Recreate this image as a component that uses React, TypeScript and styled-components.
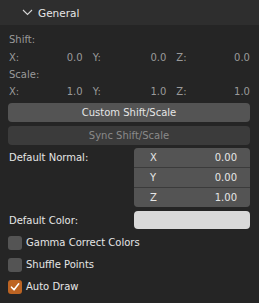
import React from 'react'
import styled, { createGlobalStyle } from 'styled-components'

const GlobalStyle = createGlobalStyle`
  html, body {
    margin: 0;
    padding: 0;
    background: #252525;
  }
`

const Panel = styled.div`
  width: 259px;
  height: 303px;
  background: #252525;
  font-family: 'DejaVu Sans', sans-serif;
  font-size: 10px;
  color: #e6e6e6;
  display: flex;
  flex-direction: column;
  overflow: hidden;
`

const Header = styled.div`
  height: 25px;
  flex: none;
  background: #2e2e2e;
  display: flex;
  align-items: center;
  gap: 5px;
  padding-left: 22px;
  font-size: 10.5px;
  color: #e6e6e6;
`

const Body = styled.div`
  display: flex;
  flex-direction: column;
  padding: 6px 9px 0 8px;
`

const Label = styled.div<{ $dim?: boolean }>`
  height: 17.4px;
  display: flex;
  align-items: center;
  padding-left: 1px;
  color: ${({ $dim }) => ($dim ? '#9a9a9a' : '#e6e6e6')};
`

const AxisRow = styled.div`
  height: 17.4px;
  display: grid;
  grid-template-columns: repeat(3, 1fr);
  column-gap: 10px;
  padding-left: 1px;
  color: #9a9a9a;
`

const AxisCell = styled.div`
  display: flex;
  align-items: center;
  justify-content: space-between;
`

const Button = styled.div<{ $disabled?: boolean }>`
  height: 19px;
  margin-top: ${({ $disabled }) => ($disabled ? '4px' : '2px')};
  border-radius: 4px;
  background: ${({ $disabled }) => ($disabled ? '#3b3b3b' : '#545454')};
  color: ${({ $disabled }) => ($disabled ? '#8a8a8a' : '#e6e6e6')};
  display: flex;
  align-items: center;
  justify-content: center;
`

const PropRow = styled.div<{ $top: number }>`
  display: flex;
  align-items: flex-start;
  margin-top: ${({ $top }) => $top}px;
`

const PropLabel = styled.div`
  width: 125px;
  padding-left: 1px;
  height: 19px;
  display: flex;
  align-items: center;
`

const Vector = styled.div`
  flex: 1;
  border-radius: 4px;
  overflow: hidden;
  display: flex;
  flex-direction: column;
  gap: 1px;
  background: #3b3b3b;
`

const VectorItem = styled.div`
  height: 19px;
  background: #545454;
  display: flex;
  align-items: center;
  justify-content: space-between;
  padding: 0 13px 0 16px;
`

const ColorField = styled.div`
  flex: 1;
  height: 18px;
  border-radius: 4px;
  background: #d9d9d9;
`

const CheckRow = styled.label<{ $top: number }>`
  display: flex;
  align-items: center;
  gap: 4px;
  height: 16px;
  margin-top: ${({ $top }) => $top}px;
`

const Box = styled.span<{ $checked?: boolean }>`
  width: 14px;
  height: 14px;
  border-radius: 3px;
  background: ${({ $checked }) => ($checked ? '#bd6423' : '#545454')};
  display: flex;
  align-items: center;
  justify-content: center;
`

const Chevron = () => (
  <svg width="11" height="7" viewBox="0 0 11 7">
    <path d="M1 1 L5.5 5.5 L10 1" fill="none" stroke="#d6d6d6" strokeWidth="1.1" />
  </svg>
)

const Check = () => (
  <svg width="10" height="10" viewBox="0 0 10 10">
    <path d="M1.5 5.2 L4 7.8 L8.7 1.8" fill="none" stroke="#fff" strokeWidth="1.6" strokeLinecap="round" strokeLinejoin="round" />
  </svg>
)

const Axes = ({ value }: { value: string }) => (
  <AxisRow>
    {['X:', 'Y:', 'Z:'].map((a) => (
      <AxisCell key={a}>
        <span>{a}</span>
        <span>{value}</span>
      </AxisCell>
    ))}
  </AxisRow>
)

const CheckItem = ({ label, checked, top }: { label: string; checked?: boolean; top: number }) => (
  <CheckRow $top={top}>
    <Box $checked={checked}>{checked && <Check />}</Box>
    <span>{label}</span>
  </CheckRow>
)

export default function App() {
  return (
    <Panel>
      <GlobalStyle />
      <Header>
        <Chevron />
        <span>General</span>
      </Header>
      <Body>
        <Label $dim>Shift:</Label>
        <Axes value="0.0" />
        <Label $dim>Scale:</Label>
        <Axes value="1.0" />
        <Button>Custom Shift/Scale</Button>
        <Button $disabled>Sync Shift/Scale</Button>
        <PropRow $top={3}>
          <PropLabel>Default Normal:</PropLabel>
          <Vector>
            {[
              ['X', '0.00'],
              ['Y', '0.00'],
              ['Z', '1.00'],
            ].map(([k, v]) => (
              <VectorItem key={k}>
                <span>{k}</span>
                <span>{v}</span>
              </VectorItem>
            ))}
          </Vector>
        </PropRow>
        <PropRow $top={4}>
          <PropLabel>Default Color:</PropLabel>
          <ColorField />
        </PropRow>
        <CheckItem label="Gamma Correct Colors" top={5} />
        <CheckItem label="Shuffle Points" top={6} />
        <CheckItem label="Auto Draw" checked top={6} />
      </Body>
    </Panel>
  )
}
